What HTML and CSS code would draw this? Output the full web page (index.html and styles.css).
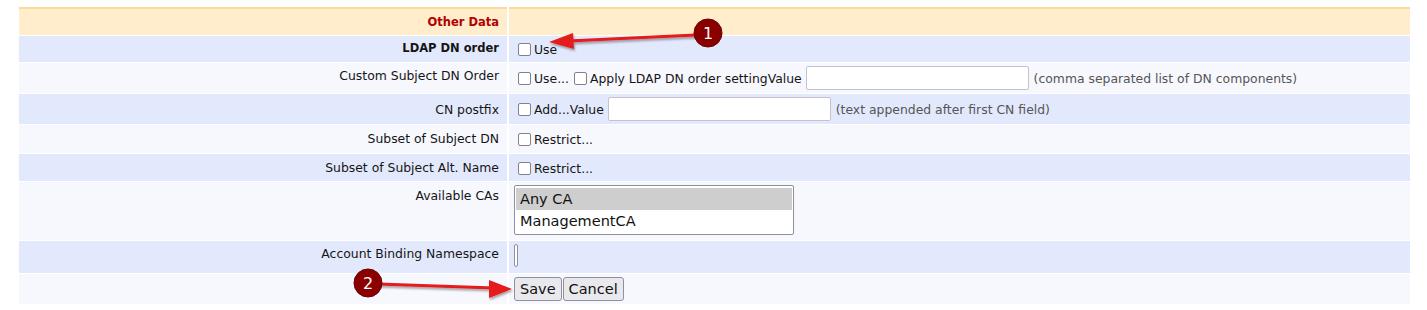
FILE: index.html
```html
<!DOCTYPE html>
<html>
<head>
<meta charset="utf-8">
<link rel="stylesheet" href="styles.css">
</head>
<body>
<div class="page">
<table class="form">
  <tr class="section r0">
    <th class="label">Other Data</th>
    <td class="value"></td>
  </tr>
  <tr class="alt r1">
    <td class="label strong">LDAP DN order</td>
    <td class="value"><label class="chk"><span class="box"></span>Use</label></td>
  </tr>
  <tr class="plain r2">
    <td class="label">Custom Subject DN Order</td>
    <td class="value">
      <label class="chk"><span class="box"></span>Use...</label>
      <label class="chk"><span class="box"></span>Apply LDAP DN order settingValue</label>
      <span class="text wide"></span>
      <span class="hint">(comma separated list of DN components)</span>
    </td>
  </tr>
  <tr class="alt r3">
    <td class="label">CN postfix</td>
    <td class="value">
      <label class="chk"><span class="box"></span>Add...Value</label>
      <span class="text wide"></span>
      <span class="hint">(text appended after first CN field)</span>
    </td>
  </tr>
  <tr class="plain r4">
    <td class="label">Subset of Subject DN</td>
    <td class="value"><label class="chk"><span class="box"></span>Restrict...</label></td>
  </tr>
  <tr class="alt r5">
    <td class="label">Subset of Subject Alt. Name</td>
    <td class="value"><label class="chk"><span class="box"></span>Restrict...</label></td>
  </tr>
  <tr class="plain r6">
    <td class="label">Available CAs</td>
    <td class="value top">
      <div class="select">
        <div class="opt selected">Any CA</div>
        <div class="opt">ManagementCA</div>
      </div>
    </td>
  </tr>
  <tr class="alt r7">
    <td class="label">Account Binding Namespace</td>
    <td class="value top"><span class="text tiny"></span></td>
  </tr>
  <tr class="plain r8">
    <td class="label"></td>
    <td class="value top"><span class="btn">Save</span><span class="btn">Cancel</span></td>
  </tr>
</table>

<svg class="notes" width="1427" height="310" viewBox="0 0 1427 310">
  <defs>
    <filter id="sh" x="-10%" y="-50%" width="120%" height="200%">
      <feDropShadow dx="1" dy="2" stdDeviation="1.2" flood-color="#000" flood-opacity="0.35"/>
    </filter>
  </defs>
  <g filter="url(#sh)">
    <line x1="696" y1="35" x2="568" y2="41" stroke="#e41b1b" stroke-width="3.2"/>
    <polygon points="549,42 573,33 574,49" fill="#e41b1b"/>
    <line x1="378" y1="284" x2="494" y2="288" stroke="#e41b1b" stroke-width="3.2"/>
    <polygon points="512,289 489,280 489,298" fill="#e41b1b"/>
  </g>
  <circle cx="708" cy="33" r="14" fill="#8a0000" stroke="#6e0000" stroke-width="1"/>
  <text x="708" y="39" class="num">1</text>
  <circle cx="368" cy="283" r="14" fill="#8a0000" stroke="#6e0000" stroke-width="1"/>
  <text x="368" y="289" class="num">2</text>
</svg>
</div>
</body>
</html>
```

FILE: styles.css
```css
html, body {
  margin: 0;
  padding: 0;
  background: #ffffff;
}

.page {
  position: relative;
  width: 1427px;
  height: 310px;
  padding: 7px 17px 0 17px;
  box-sizing: border-box;
}

.form {
  width: 1395px;
  border-collapse: separate;
  border-spacing: 2px 1px;
  font-family: "DejaVu Sans", Verdana, sans-serif;
  font-size: 12.4px;
  line-height: 15px;
  color: #151515;
  margin-top: -1px;
}

.form td, .form th {
  padding: 0;
  box-sizing: border-box;
}

.form .label {
  width: 488px;
  text-align: right;
  vertical-align: top;
  padding: 5px 8px 0 0;
  font-weight: normal;
}

.form .value {
  vertical-align: middle;
  padding: 0 0 0 9px;
}

.form .value.top {
  vertical-align: top;
  padding: 3px 0 0 5px;
}

.section th, .section td {
  background: #ffedcc;
  border-top: 2px solid #fbd89b;
}

.form .section th {
  color: #b30000;
  font-weight: bold;
  font-size: 11.5px;
  vertical-align: middle;
  padding-top: 1px;
}

.alt td { background: #e3e9fc; }
.plain td { background: #f7f8fe; }

.form .strong {
  font-weight: bold;
  font-size: 11.5px;
  padding-top: 5px;
}

.r0 th, .r0 td { height: 28px; }
.r1 td { height: 26px; }
.r2 td { height: 30px; }
.r3 td { height: 30px; }
.r4 td { height: 28px; }
.r5 td { height: 27px; }
.r6 td { height: 58px; }
.r7 td { height: 32px; }
.r8 td { height: 30px; }

.form .r1 .label { padding-top: 5px; }
.form .r2 .label { padding-top: 5px; }
.form .r3 .label { padding-top: 8px; }
.form .r4 .label { padding-top: 6px; }
.form .r5 .label { padding-top: 6px; }
.form .r6 .label { padding-top: 6px; }
.form .r7 .label { padding-top: 5px; }

.chk {
  display: inline-flex;
  align-items: center;
  gap: 3px;
  vertical-align: middle;
  margin-right: 1px;
}

.box {
  display: inline-block;
  width: 13px;
  height: 13px;
  box-sizing: border-box;
  border: 1.5px solid #82828e;
  border-radius: 2px;
  background: #fff;
}

.text {
  display: inline-block;
  vertical-align: middle;
  border: 1px solid #c3c3ce;
  border-radius: 2px;
  background: #fff;
  box-sizing: border-box;
}

.text.wide {
  width: 223px;
  height: 24px;
  margin-left: -1px;
}

.text.tiny {
  vertical-align: top;
  width: 4px;
  height: 23px;
  margin-left: 0;
  border: 1px solid #8f8f9d;
}

.hint {
  color: #555;
  margin-left: 1px;
  vertical-align: middle;
}

.select {
  width: 280px;
  height: 50px;
  border: 1px solid #8f8f9d;
  border-radius: 2px;
  background: #fff;
  box-sizing: border-box;
  padding: 2px 1px;
  font-size: 14.5px;
  color: #111;
}

.opt {
  height: 22px;
  line-height: 22px;
  padding-left: 4px;
}

.opt.selected { background: #cecece; }

.btn {
  display: inline-block;
  vertical-align: top;
  height: 24px;
  line-height: 22px;
  padding: 0 5px;
  border: 1px solid #8f8f9d;
  border-radius: 3px;
  background: #e9e9ed;
  box-sizing: border-box;
  font-size: 14.5px;
  color: #111;
  margin-right: 1px;
}

.notes {
  position: absolute;
  left: 0;
  top: 0;
  pointer-events: none;
}

.num {
  fill: #ffffff;
  font-family: "DejaVu Sans", sans-serif;
  font-size: 16px;
  text-anchor: middle;
}
```
